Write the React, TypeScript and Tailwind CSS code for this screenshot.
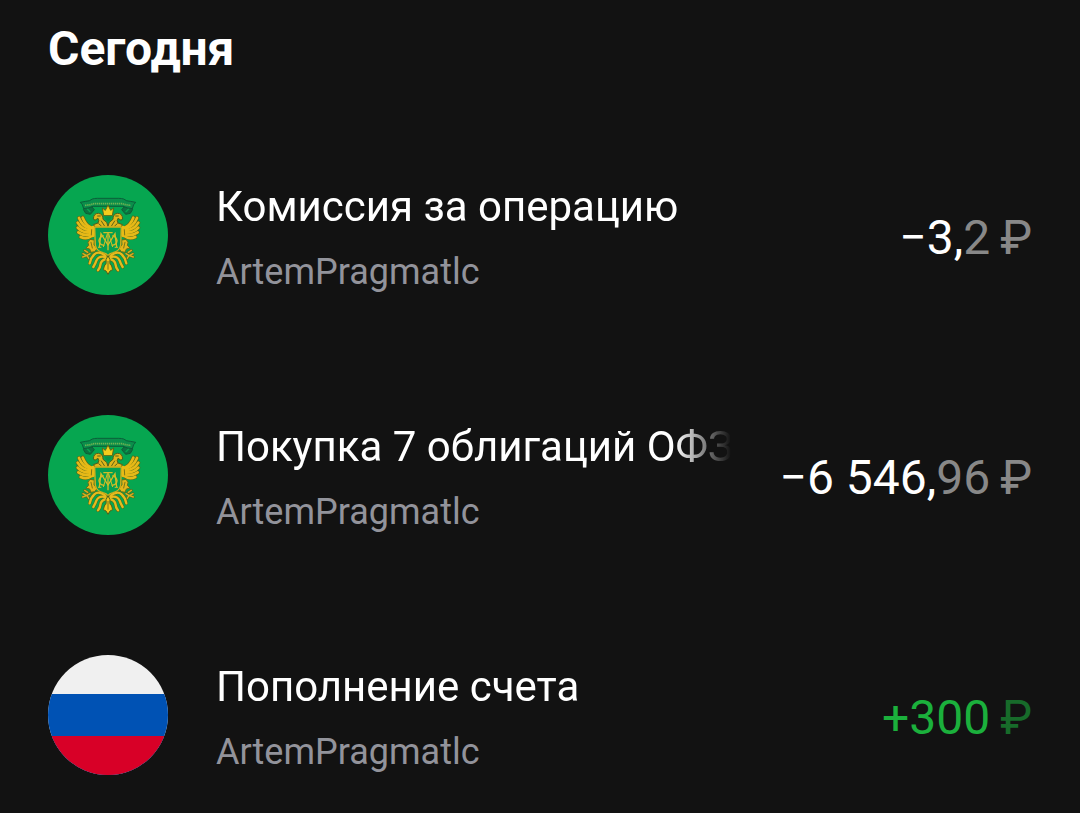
import type { ReactNode } from 'react';

const feathers = [
  'M150 170 Q136 162 128 142',
  'M150 174 Q128 170 117 143',
  'M151 179 Q126 180 113 157',
  'M152 185 Q129 190 113 172',
  'M154 190 Q134 199 115 186',
  'M156 196 Q141 208 122 200',
];

const plumes = [
  'M196 256 Q176 240 163 252 Q152 262 149 279',
  'M198 261 Q177 254 169 271 Q166 281 160 290',
  'M200 266 Q183 268 181 284 Q180 293 174 300',
];

function EagleHalf() {
  return (
    <g strokeLinecap="round" strokeLinejoin="round" fill="none">
      {/* ribbon tail */}
      <path d="M132 109 L155 109 L163 118 L151 132 L137 129 L131 119 Z" fill="#0b7240" stroke="#135b35" strokeWidth="3" />
      <path d="M142 116 L150 124" stroke="#06a650" strokeWidth="4" />
      {/* wing */}
      {feathers.map((d) => (
        <path key={`edge-${d}`} d={d} stroke="#55691a" strokeWidth="12" />
      ))}
      {feathers.map((d) => (
        <path key={d} d={d} stroke="#e6b917" strokeWidth="8" />
      ))}
      <path d="M140 162 Q151 173 163 164 L167 171 L164 198 Q157 204 148 196 Q144 181 140 162 Z" fill="#e8bb16" />
      <path d="M155 178 L154 194" stroke="#79761a" strokeWidth="3" />
      {/* eagle head */}
      <path
        d="M160 145 Q161 128 176 129 Q190 132 189 147 L200 156 L205 171 L166 171 L160 163 L174 158 Q179 151 174 144 L166 149 Z"
        fill="#deb51b"
        stroke="#535e18"
        strokeWidth="3"
      />
      <path d="M173 137 H181 M184 152 L193 166 M176 160 L184 167" stroke="#59641a" strokeWidth="3" />
      {/* leg and claw */}
      <path
        d="M149 208 Q140 216 146 225 L138 233 L149 236 L153 246 L164 244 L171 235 L162 223 L163 210 Z"
        fill="#e2b61a"
        stroke="#66701a"
        strokeWidth="3"
      />
      <path d="M150 250 L140 256 L129 250 M140 256 L128 260 M141 256 L147 265 M134 240 L143 246" stroke="#5b691b" strokeWidth="8" />
      <path d="M150 250 L140 256 L129 250 M140 256 L128 260 M141 256 L147 265 M134 240 L143 246" stroke="#d6b120" strokeWidth="4" />
      <path d="M153 216 L157 233" stroke="#79761a" strokeWidth="3" />
      {/* tail plumes */}
      {plumes.map((d) => (
        <path key={`edge-${d}`} d={d} stroke="#4e681d" strokeWidth="10" />
      ))}
      {plumes.map((d) => (
        <path key={d} d={d} stroke="#e6bb1c" strokeWidth="7" />
      ))}
    </g>
  );
}

function EmblemIcon() {
  return (
    <svg viewBox="24 14 360 360" className="size-30 shrink-0 rounded-full bg-[#06a650]" aria-hidden="true">
      <EagleHalf />
      <g transform="translate(408 0) scale(-1 1)">
        <EagleHalf />
      </g>
      {/* ribbon */}
      <path
        d="M121 96 L137 93 Q149 93 157 86 Q163 84 172 84 H236 Q245 84 251 86 Q259 93 271 93 L287 96 L281 103 L277 115 Q262 114 249 108 H159 Q146 114 131 115 L127 103 Z"
        fill="#0b8e4b"
        stroke="#0b5f39"
        strokeWidth="3"
        strokeLinejoin="round"
      />
      <path d="M135 105 Q150 104 161 100 H247 Q258 104 273 105" fill="none" stroke="#6fb352" strokeWidth="5" strokeDasharray="4 2" />
      {/* crown */}
      <path d="M187 113 L196 120 L204 104 L212 120 L221 113 L217 136 H191 Z" fill="#f4cd1b" stroke="#5c6716" strokeWidth="3" strokeLinejoin="round" />
      <path d="M194 139 H214 L210 149 L204 153 L198 149 Z" fill="#07934a" />
      {/* shield */}
      <path
        d="M164 170 H244 L242 224 Q239 242 219 247 Q208 249 204 256 Q200 249 189 247 Q169 242 166 224 Z"
        fill="#06a04f"
        stroke="#d3af1c"
        strokeWidth="4"
        strokeLinejoin="round"
      />
      {/* monogram */}
      <g fill="none" stroke="#d2bd27" strokeWidth="4">
        <path d="M178 230 L183 190 L204 224 L225 190 L230 230" />
        <path d="M190 187 H218 M204 187 V240" />
        <path d="M191 196 Q178 200 177 211 Q178 224 193 225 M217 196 Q230 200 231 211 Q230 224 215 225" />
        <path d="M190 230 L202 190 M218 230 L206 190 M174 231 H184 M224 231 H234" strokeWidth="3" />
      </g>
      {/* central tail feather */}
      <path
        d="M204 256 L210 268 Q208 285 214 284 L218 298 L210 302 L204 312 L198 302 L190 298 L194 284 Q200 285 198 268 Z"
        fill="#edc419"
        stroke="#52631a"
        strokeWidth="3"
      />
      <path d="M204 272 V298" stroke="#79761a" strokeWidth="3" />
    </svg>
  );
}

function FlagIcon() {
  return (
    <svg viewBox="0 0 120 120" className="size-30 shrink-0 rounded-full" aria-hidden="true">
      <rect width="120" height="120" fill="#f0f0f0" />
      <rect y="39" width="120" height="81" fill="#0052b4" />
      <rect y="81" width="120" height="39" fill="#d80027" />
    </svg>
  );
}

interface OperationProps {
  icon: ReactNode;
  title: string;
  account: string;
  amount: ReactNode;
  currencyClass?: string;
}

function Operation({ icon, title, account, amount, currencyClass = 'text-[#888888]' }: OperationProps) {
  return (
    <li className="flex items-start gap-12">
      {icon}
      <div className="min-w-0 flex-1">
        <p className="overflow-hidden mask-[linear-gradient(to_left,transparent,black_56px)] text-[42px] leading-16 whitespace-nowrap text-white">
          {title}
        </p>
        <p className="text-[36px] leading-[66px] text-[#92939b]">{account}</p>
      </div>
      <p className="flex shrink-0 gap-[10px] text-[48px] leading-[126px] whitespace-nowrap text-white">
        <span>{amount}</span>
        <span className={currencyClass}>₽</span>
      </p>
    </li>
  );
}

export default function App() {
  return (
    <main className="min-h-screen bg-[#121212] px-12 pt-[17px] pb-8 font-[Roboto,sans-serif]">
      <h1 className="text-[48px] leading-16 font-bold text-white">Сегодня</h1>
      <ul className="mt-[94px] flex flex-col gap-[110px]">
        <Operation
          icon={<EmblemIcon />}
          title="Комиссия за операцию"
          account="ArtemPragmatlc"
          amount={<>−3,<span className="text-[#888888]">2</span></>}
        />
        <Operation
          icon={<EmblemIcon />}
          title="Покупка 7 облигаций ОФЗ"
          account="ArtemPragmatlc"
          amount={<>−6 546,<span className="text-[#888888]">96</span></>}
        />
        <Operation
          icon={<FlagIcon />}
          title="Пополнение счета"
          account="ArtemPragmatlc"
          amount={<span className="text-[#1bb03c]">+300</span>}
          currencyClass="text-[#176b2a]"
        />
      </ul>
    </main>
  );
}
